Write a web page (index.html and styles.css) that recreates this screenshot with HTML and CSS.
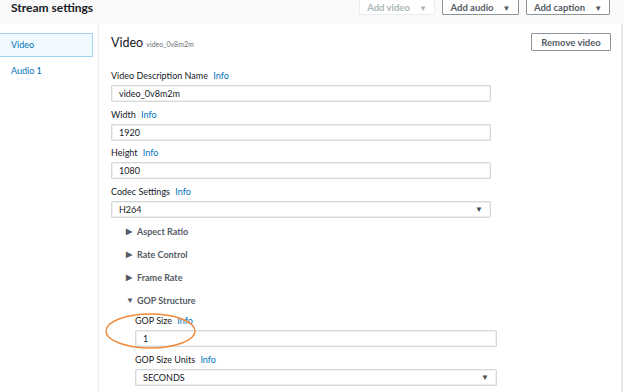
FILE: index.html
```html
<!DOCTYPE html>
<html>
<head>
<meta charset="utf-8">
<link rel="stylesheet" href="styles.css">
</head>
<body>
<header class="header">
  <h1 class="title">Stream settings</h1>
  <div class="actions">
    <button class="btn btn-disabled">Add video <span class="caret">▼</span></button>
    <button class="btn">Add audio <span class="caret">▼</span></button>
    <button class="btn">Add caption <span class="caret">▼</span></button>
  </div>
</header>
<div class="body">
  <nav class="side">
    <div class="side-item side-active">Video</div>
    <div class="side-item">Audio 1</div>
  </nav>
  <main class="main">
    <div class="title-row">
      <div class="section-title">Video <span class="section-sub">video_0v8m2m</span></div>
      <button class="btn btn-remove">Remove video</button>
    </div>
    <div class="fields">
      <div class="field">
        <div class="label">Video Description Name <span class="info">Info</span></div>
        <div class="input">video_0v8m2m</div>
      </div>
      <div class="field">
        <div class="label">Width <span class="info">Info</span></div>
        <div class="input">1920</div>
      </div>
      <div class="field">
        <div class="label">Height <span class="info">Info</span></div>
        <div class="input">1080</div>
      </div>
      <div class="field">
        <div class="label">Codec Settings <span class="info">Info</span></div>
        <div class="input select">H264 <span class="sel-caret">▼</span></div>
      </div>
    </div>
    <div class="expanders">
      <div class="exp"><span class="tri">▶</span>Aspect Ratio</div>
      <div class="exp"><span class="tri">▶</span>Rate Control</div>
      <div class="exp"><span class="tri">▶</span>Frame Rate</div>
      <div class="exp"><span class="tri">▼</span>GOP Structure</div>
    </div>
    <div class="nested">
      <svg class="mark" width="91" height="36" viewBox="0 0 91 36"><ellipse cx="45.5" cy="18" rx="44.5" ry="17" fill="none" stroke="#ef8a3c" stroke-width="1.4"/></svg>
      <div class="field">
        <div class="label">GOP Size <span class="info">Info</span></div>
        <div class="input">1</div>
      </div>
      <div class="field">
        <div class="label">GOP Size Units <span class="info">Info</span></div>
        <div class="input select">SECONDS <span class="sel-caret">▼</span></div>
      </div>
    </div>
  </main>
</div>
</body>
</html>
```
FILE: styles.css
```css
* { box-sizing: border-box; }
html, body { margin: 0; padding: 0; background: #fff; }
body {
  width: 624px;
  height: 392px;
  overflow: hidden;
  font-family: "Lato", "Open Sans", sans-serif;
  color: #16191f;
}
.header {
  height: 24px;
  background: #fafafa;
  display: flex;
  align-items: flex-start;
}
.title {
  margin: 0;
  padding-left: 11px;
  font-size: 12px;
  line-height: 16px;
  font-weight: 700;
  color: #16191f;
}
.actions {
  margin-left: auto;
  margin-right: 14px;
  margin-top: -6px;
  display: flex;
  gap: 7px;
}
.btn {
  font-family: inherit;
  font-size: 9.5px;
  font-weight: 700;
  color: #545b64;
  background: #fff;
  border: 1px solid #8d949c;
  border-radius: 1px;
  height: 21px;
  padding: 6px 0 0;
  display: flex;
  justify-content: center;
  align-items: center;
  gap: 9px;
}
.actions .btn:nth-child(1) { width: 76px; }
.actions .btn:nth-child(2) { width: 77px; }
.actions .btn:nth-child(3) { width: 84px; }
.btn-disabled {
  color: #aab7b8;
  border-color: #eaeded;
}
.caret { font-size: 8px; }
.body {
  display: flex;
  height: 368px;
  width: 623px;
  border-right: 2px solid #e6e8e8;
}
.side {
  width: 99px;
  border-right: 1px solid #eaeded;
  padding-top: 9px;
  flex-shrink: 0;
}
.side-item {
  width: 93px;
  height: 24px;
  line-height: 24px;
  padding-left: 11px;
  font-size: 9px;
  color: #0073bb;
  border: 1px solid transparent;
  border-left: none;
  margin-bottom: 1px;
}
.side-active {
  background: #f1faff;
  border-color: #9fd3ef;
  line-height: 22px;
}
.main {
  flex: 1;
  padding: 9px 10px 0 12px;
}
.title-row {
  height: 24px;
  display: flex;
  justify-content: space-between;
  align-items: flex-start;
}
.section-title {
  font-size: 12.5px;
  line-height: 20px;
  color: #16191f;
}
.section-sub {
  font-size: 7px;
  color: #687078;
}
.btn-remove {
  width: 80px;
  height: 18px;
  padding: 0;
  color: #545b64;
}
.fields {
  margin-top: 12px;
  display: flex;
  flex-direction: column;
  gap: 5.5px;
}
.field { width: 380px; }
.label {
  font-size: 9px;
  line-height: 14px;
  height: 14px;
  margin-bottom: 2px;
  color: #16191f;
}
.info {
  color: #0073bb;
  margin-left: 3px;
}
.input {
  height: 17px;
  border: 1px solid #d5dbdb;
  box-shadow: inset 0 0 0 1px #eef0f0;
  border-radius: 1px;
  font-size: 9px;
  line-height: 15px;
  padding-left: 7px;
  color: #16191f;
  display: flex;
  align-items: center;
}
.select { justify-content: space-between; padding-right: 7px; }
.sel-caret { font-size: 8px; color: #454b54; }
.expanders {
  margin-top: 2.5px;
}
.exp {
  height: 23px;
  line-height: 23px;
  padding-left: 15px;
  font-size: 9px;
  font-weight: 700;
  color: #545b64;
  display: flex;
  align-items: center;
}
.tri {
  font-size: 8px;
  width: 11px;
  color: #545b64;
}
.nested {
  position: relative;
  margin-top: 2px;
  margin-left: 24px;
  display: flex;
  flex-direction: column;
  gap: 5.5px;
}
.nested .field { width: 362px; }
.mark {
  position: absolute;
  left: -30px;
  top: -1px;
  pointer-events: none;
}
```
